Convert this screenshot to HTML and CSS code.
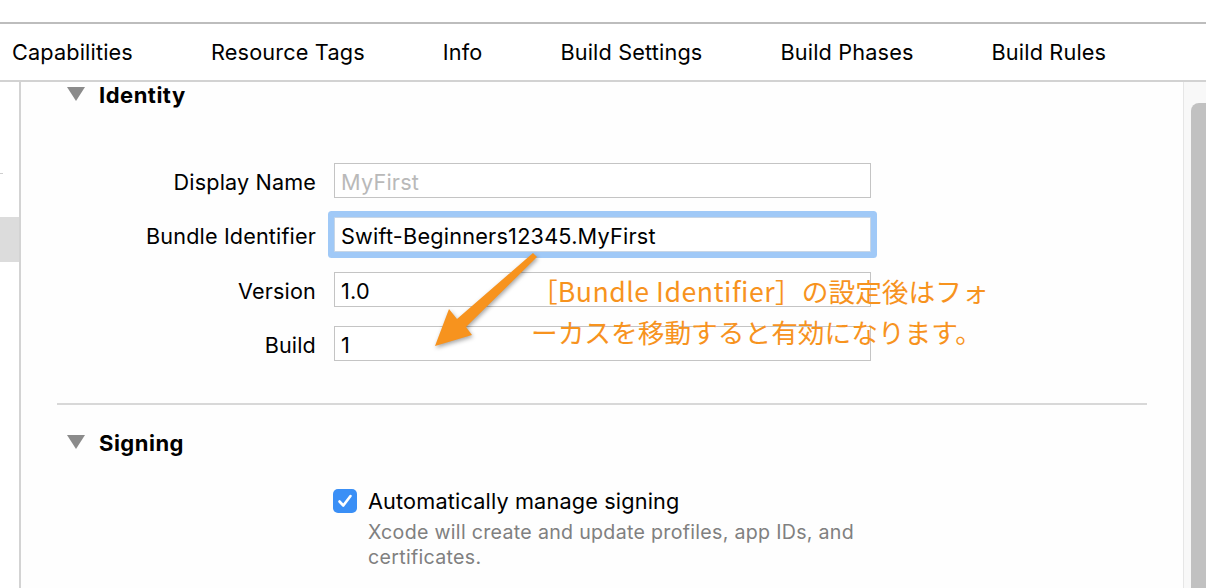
FILE: index.html
```html
<!DOCTYPE html>
<html lang="ja">
<head>
<meta charset="utf-8">
<title>Xcode General</title>
<link rel="stylesheet" href="styles.css">
</head>
<body>
<div class="page">
  <div class="topstrip"></div>
  <nav class="tabs">
    <span class="tab">Capabilities</span>
    <span class="tab">Resource Tags</span>
    <span class="tab">Info</span>
    <span class="tab">Build Settings</span>
    <span class="tab">Build Phases</span>
    <span class="tab">Build Rules</span>
  </nav>
  <div class="body">
    <aside class="sidebar">
      <div class="tick"></div>
      <div class="selected"></div>
    </aside>
    <main class="main">
      <section class="section identity">
        <div class="section-head">
          <span class="disclosure"></span>
          <span class="section-title">Identity</span>
        </div>
        <div class="form">
          <label class="label">Display Name</label>
          <div class="field placeholder">MyFirst</div>
          <label class="label">Bundle Identifier</label>
          <div class="field focused">Swift-Beginners12345.MyFirst</div>
          <label class="label">Version</label>
          <div class="field">1.0</div>
          <label class="label">Build</label>
          <div class="field">1</div>
        </div>
      </section>
      <div class="separator"></div>
      <section class="section signing">
        <div class="section-head">
          <span class="disclosure"></span>
          <span class="section-title">Signing</span>
        </div>
        <div class="check-row">
          <span class="checkbox">
            <svg viewBox="0 0 24 24" width="24" height="24"><path d="M6.5 12.5 L10.3 16.5 L17.5 7" fill="none" stroke="#fff" stroke-width="2.6" stroke-linecap="round" stroke-linejoin="round"/></svg>
          </span>
          <div class="check-text">
            <div class="check-label">Automatically manage signing</div>
            <div class="check-desc">Xcode will create and update profiles, app IDs, and<br>certificates.</div>
          </div>
        </div>
      </section>
    </main>
    <div class="scrollbar"><div class="thumb"></div></div>
  </div>

  <svg class="arrow" width="1206" height="588" viewBox="0 0 1206 588">
    <polygon points="533,253 537,257 466,327 472,335 435,346 449,309 457,319" fill="#f7931e"/>
  </svg>
  <div class="annotation">［<span class="latin">Bundle Identifier</span>］の設定後はフォ<br>ーカスを移動すると有効になります。</div>
</div>
</body>
</html>
```

FILE: styles.css
```css
html, body {
  margin: 0;
  padding: 0;
  background: #ffffff;
}

.page {
  position: relative;
  width: 1206px;
  height: 588px;
  overflow: hidden;
  font-family: "Inter", "Liberation Sans", sans-serif;
  color: #000;
  display: flex;
  flex-direction: column;
}

.topstrip {
  height: 22px;
  flex: none;
  border-bottom: 2px solid #bdbdbd;
}

.tabs {
  height: 56px;
  flex: none;
  display: flex;
  align-items: center;
  gap: 78px;
  padding-left: 12px;
  border-bottom: 2px solid #d2d2d2;
  font-size: 21.7px;
  letter-spacing: 0.15px;
  white-space: nowrap;
}

.body {
  flex: 1;
  display: flex;
  min-height: 0;
}

.sidebar {
  width: 19px;
  flex: none;
  border-right: 2px solid #d3d3d3;
  display: flex;
  flex-direction: column;
}

.tick {
  margin-top: 91px;
  width: 3px;
  height: 1px;
  background: #cfcfcf;
}

.selected {
  margin-top: 43px;
  height: 45px;
  background: #dcdcdc;
}

.main {
  flex: 1;
  display: flex;
  flex-direction: column;
  background: #fefefe;
}

.section-head {
  height: 26px;
  display: flex;
  align-items: center;
  padding-left: 46px;
}

.disclosure {
  width: 0;
  height: 0;
  border-left: 9px solid transparent;
  border-right: 9px solid transparent;
  border-top: 14px solid #8b8b8b;
  margin-right: 14px;
  margin-top: -2px;
}

.section-title {
  font-weight: 700;
  font-size: 22px;
  letter-spacing: 0.5px;
}

.form {
  margin-top: 55px;
  display: grid;
  grid-template-columns: 295px 537px;
  column-gap: 18px;
  row-gap: 19.4px;
  align-items: center;
}

.label {
  text-align: right;
  font-size: 21.6px;
  letter-spacing: 0.15px;
  padding-top: 3px;
}

.field {
  box-sizing: border-box;
  height: 35px;
  border: 1px solid #c4c4c4;
  background: #fff;
  padding: 3px 6px 0 6px;
  display: flex;
  align-items: center;
  font-size: 21.7px;
  letter-spacing: 0.2px;
  white-space: nowrap;
}

.field.placeholder {
  color: #b9b9b9;
}

.field.focused {
  border-color: #c8d6e6;
  box-shadow: 0 0 0 6px #a0c9f7;
  border-radius: 1px;
}

.separator {
  margin: 42px 36px 0 36px;
  height: 2px;
  background: #d8d8d8;
}

.signing .section-head {
  margin-top: 25px;
}

.check-row {
  margin-top: 33px;
  padding-left: 312px;
  display: flex;
  align-items: flex-start;
  gap: 11px;
}

.checkbox {
  width: 24px;
  height: 24px;
  border-radius: 5px;
  background: #3a8ff6;
  flex: none;
  display: flex;
}

.check-label {
  font-size: 21.7px;
  line-height: 24px;
  letter-spacing: 0.15px;
}

.check-desc {
  margin-top: 7px;
  font-size: 19.6px;
  line-height: 25px;
  color: #808080;
  letter-spacing: 0.3px;
}

.scrollbar {
  width: 22px;
  flex: none;
  border-left: 1px solid #e6e6e6;
  background: #f8f8f8;
  display: flex;
  flex-direction: column;
  align-items: flex-end;
}

.thumb {
  margin-top: 21px;
  width: 15px;
  flex: 1;
  background: #c1c1c1;
  border-radius: 8px 0 0 0;
}

.arrow {
  position: absolute;
  left: 0;
  top: 0;
  pointer-events: none;
  filter: drop-shadow(1px 2px 2px rgba(0, 0, 0, 0.35));
}

.annotation {
  position: absolute;
  left: 531px;
  top: 270px;
  font-family: "Noto Sans CJK JP", "Noto Sans", sans-serif;
  font-size: 26.7px;
  line-height: 41px;
  color: #f7931e;
  white-space: nowrap;
  font-weight: 400;
}

.annotation .latin {
  letter-spacing: 0.5px;
}
```
